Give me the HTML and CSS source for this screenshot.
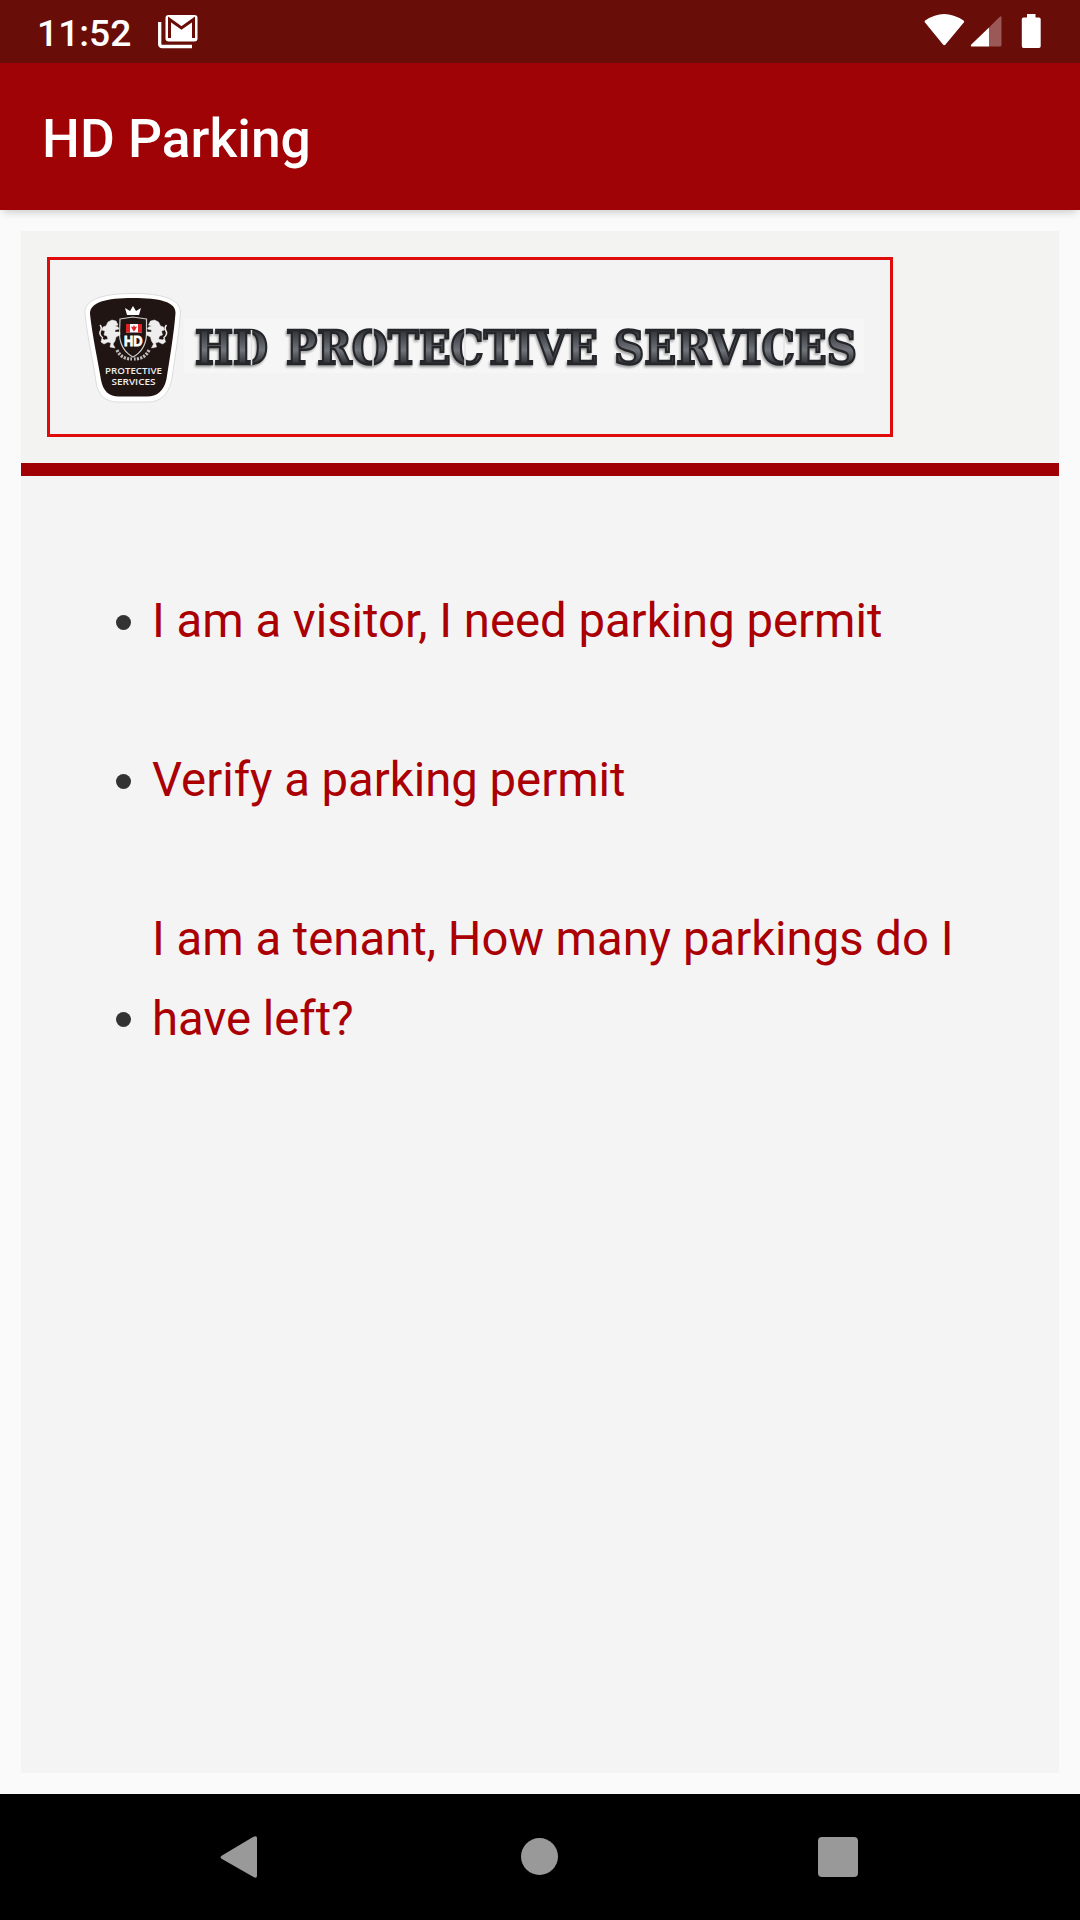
FILE: index.html
```html
<!DOCTYPE html>
<html lang="en">
<head>
    <meta charset="UTF-8">
    <meta name="viewport" content="width=device-width, initial-scale=1.0">
    <title>HD Parking</title>
    <link rel="stylesheet" href="styles.css">
</head>
<body>
    <div class="status-bar">
        <span class="time">11:52</span>
        <svg class="mail-icon" width="40" height="34" viewBox="0 0 40 34">
            <path d="M1.7 7V29q0 2.500 2.500 2.500H34" fill="none" stroke="#fff" stroke-width="3.300"/>
            <rect x="7.500" y="0" width="32" height="26.500" rx="3" fill="#fff"/>
            <path d="M11.500 23V4.500L23.500 13L35.500 4.500V23" fill="none" stroke="#690d09" stroke-width="3"/>
        </svg>
        <svg class="system-icons" width="118" height="36" viewBox="0 0 118 36">
            <path d="M1 8.500Q0 7.500 1.200 6.500Q20 -6.500 39.500 6.500Q40.700 7.500 39.800 8.500L21.500 30.500Q20.300 32 19 30.500Z" fill="#fff"/>
            <path d="M65 13.500V32.500H48Q46 32.500 47.300 30.500Z" fill="#fff"/>
            <path d="M65 13.500L75.500 3Q77.500 1.500 77.500 3.500V31Q77.500 32.500 76 32.500H65Z" fill="#9a5957"/>
            <path d="M103 0H111.500V3.500H115Q116.700 3.500 116.700 5.200V32Q116.700 34 115 34H99.500Q97.800 34 97.800 32V5.200Q97.800 3.500 99.500 3.500H103Z" fill="#fff"/>
        </svg>
    </div>

    <div class="app-bar">
        <h1>HD Parking</h1>
    </div>

    <div class="content">
        <div class="panel">
            <div class="header">
                <div class="logo">
                    <svg width="840" height="174" viewBox="50 260 840 174">
                        <defs>
                            <linearGradient id="steel" x1="0" y1="0" x2="0" y2="1">
                                <stop offset="0.2" stop-color="#33363a"/>
                                <stop offset="0.55" stop-color="#70747b"/>
                                <stop offset="0.85" stop-color="#222326"/>
                            </linearGradient>
                        </defs>

                        <!-- badge -->
                        <path d="M85 313C84 299 104 293.500 133 293.500S181 299 180.500 313C179 334 175 357 171.500 381C168 395 160 402 148 402H118C105 402 98 395 96 382C94 365 87 336 85 313Z" fill="#fff" stroke="#d4d4d4" stroke-width="0.8"/>
                        <path d="M90 314C90 302 106 298 133 298S176 302 175.500 313C174 333 170 357 166.500 379C164 391 157 396.500 147 396.500H119C109 396.500 103 391 101 380C98 361 92 334 90 314Z" fill="#211513"/>
                        <path d="M127 315L125 308L130 311L133 306L136 311L141 308L139 315Z" fill="#fff"/>
                        <path d="M120 319Q127 318 132.500 317Q140 318 146.500 319V334Q146 350 133 357Q120 350 119.500 334Z" fill="#211513" stroke="#ccc" stroke-width="1.200"/>
                        <rect x="126" y="324" width="16" height="8.500" fill="#fff"/>
                        <path d="M126 324h4v8.500h-4zM138 324h4v8.500h-4zM134 325l1 2 2-.5-1.500 3-1.500 2-1.500-2-1.500-3 2 .5z" fill="#e02125"/>
                        <text class="badge-hd" x="124" y="345.500" textLength="18.500" lengthAdjust="spacingAndGlyphs">HD</text>
                        <g id="lion" fill="#eee" stroke="#eee" stroke-width="0.500">
                            <path d="M116 321l-4-1-4 2-2 4-3 1-1 3 3 1-1 4 3 1 1 3-4 1-2-2-1 4 3 2 4-2 3 1-1 4 5 1-2-4 2-3 1-4 4-2v-3l-5 0 0-2 4-1-1-2-3-1 3-1z"/>
                            <path d="M103 338q-5-4-2-8 1-3-1-5" fill="none" stroke-width="1.500"/>
                        </g>
                        <use href="#lion" transform="translate(266.500 0) scale(-1 1)"/>
                        <path d="M117 350Q121 359 132 359M149 350Q145 359 134 359" fill="none" stroke="#bbb" stroke-width="3.200" stroke-dasharray="2.200 1.200"/>
                        <text class="badge-text" x="105" y="374" textLength="57" lengthAdjust="spacingAndGlyphs">PROTECTIVE</text>
                        <text class="badge-text" x="111.500" y="384.500" textLength="44" lengthAdjust="spacingAndGlyphs">SERVICES</text>

                        <!-- company name -->
                        <rect x="184" y="319" width="680" height="54" fill="#f6f6f6"/>
                        <g class="brand">
                            <text x="195" y="363.500" textLength="73" lengthAdjust="spacingAndGlyphs">HD</text>
                            <text x="286" y="363.500" textLength="312" lengthAdjust="spacingAndGlyphs">PROTECTIVE</text>
                            <text x="614" y="363.500" textLength="243" lengthAdjust="spacingAndGlyphs">SERVICES</text>
                        </g>
                        <!-- stencil cuts -->
                        <path d="M251.500 330V365M373 328V366M465 328V366M784 328V366" stroke="#e4e4e4" stroke-width="1.500"/>
                    </svg>
                </div>
            </div>
            <ul class="menu">
                <li><a href="#">I am a visitor, I need parking permit</a></li>
                <li><a href="#">Verify a parking permit</a></li>
                <li><a href="#">I am a tenant, How many parkings do I have left?</a></li>
            </ul>
        </div>
    </div>

    <div class="nav-bar">
        <svg width="38" height="44" viewBox="0 0 38 44">
            <path d="M2 20.500L33 2Q37 0 37 3V40.500Q37 44 33.500 42L2 24Q-1 22.300 2 20.500Z" fill="#999"/>
        </svg>
        <span class="home"></span>
        <span class="recent"></span>
    </div>
</body>
</html>
```

FILE: styles.css
```css
* {
    box-sizing: border-box;
}
body {
    margin: 0;
    height: 1920px;
    display: flex;
    flex-direction: column;
    font-family: Roboto, sans-serif;
    background-color: #fafafa;
}
.status-bar {
    height: 63px;
    padding: 0 38px 0 37px;
    display: flex;
    align-items: flex-start;
    background-color: #690d09;
    color: #fff;
}
.time {
    font-size: 37.2px;
    font-weight: 500;
    line-height: 43px;
    margin-top: 12px;
    width: 121px;
}
.mail-icon {
    margin-top: 15px;
}
.system-icons {
    margin-top: 14px;
    margin-left: auto;
}
.app-bar {
    height: 147px;
    padding: 0 42px;
    display: flex;
    align-items: center;
    background-color: #a00306;
    color: #fff;
    box-shadow: 0 5px 8px -3px rgba(0, 0, 0, 0.2);
}
h1 {
    margin: 4px 0 0;
    font-size: 53.4px;
    font-weight: 500;
}
.content {
    flex: 1;
    padding: 21px;
    display: flex;
}
.panel {
    flex: 1;
    background-color: #f4f4f4;
}
.header {
    height: 245px;
    padding: 26px;
    background-color: #f3f3f2;
    border-bottom: 13px solid #a00004;
}
.logo {
    width: 846px;
    height: 180px;
    border: 3px solid #e00c0c;
    background-color: #f3f3f3;
}
.logo svg {
    display: block;
}
.badge-hd {
    font: bold 14px "Liberation Sans", sans-serif;
    fill: #fff;
    stroke: #fff;
    stroke-width: 0.8px;
}
.badge-text {
    font: 600 9.5px "Open Sans", sans-serif;
    fill: #eee;
}
.brand {
    font: bold 46px "DejaVu Serif", serif;
    fill: url(#steel);
    stroke: #252629;
    stroke-width: 2.4px;
    filter: drop-shadow(-1px 2px 1px rgba(0, 0, 0, 0.35));
}
.menu {
    list-style: none;
    margin: 0;
    padding: 106px 80px 0 95px;
}
.menu li {
    display: flex;
    align-items: flex-end;
    margin-bottom: 79.5px;
    font-size: 47.25px;
    line-height: 79.5px;
}
.menu li::before {
    content: "";
    flex: none;
    width: 15px;
    height: 15px;
    margin: 0 21px 32px 0;
    border-radius: 50%;
    background-color: #333;
}
.menu a {
    color: #aa0004;
    text-decoration: none;
}
.nav-bar {
    height: 126px;
    padding: 0 222px 1px 220px;
    display: flex;
    align-items: center;
    justify-content: space-between;
    background-color: #000;
}
.home {
    width: 37px;
    height: 37px;
    margin-left: 2px;
    border-radius: 50%;
    background-color: #999;
}
.recent {
    width: 40px;
    height: 40px;
    border-radius: 4px;
    background-color: #999;
}
```
